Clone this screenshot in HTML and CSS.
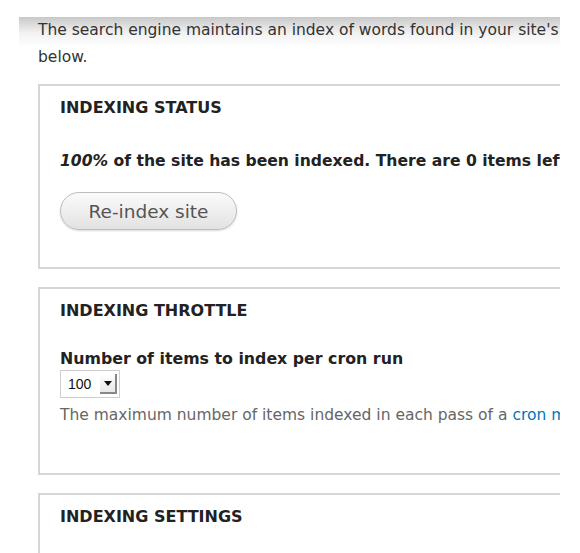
FILE: index.html
```html
<!DOCTYPE html>
<html>
<head>
<meta charset="utf-8">
<link rel="stylesheet" href="styles.css">
</head>
<body>
<div class="clip">
  <div class="page">
    <div class="help">
      <p><span class="line">The search engine maintains an index of words found in your site's content.</span><br>below.</p>
    </div>
    <fieldset class="group">
      <legend class="title">Indexing status</legend>
      <p class="status"><em>100%</em> of the site has been indexed. There are 0 items left to index.</p>
      <button class="btn" type="button">Re-index site</button>
    </fieldset>
    <fieldset class="group">
      <legend class="title">Indexing throttle</legend>
      <label class="label">Number of items to index per cron run</label>
      <div class="select"><span class="val">100</span><span class="arrow"><svg width="8" height="5" viewBox="0 0 8 5"><path d="M0 0h8L4 5z" fill="#111"/></svg></span></div>
      <p class="desc">The maximum number of items indexed in each pass of a <a href="#">cron maintenance task</a>.</p>
    </fieldset>
    <fieldset class="group last">
      <legend class="title">Indexing settings</legend>
    </fieldset>
  </div>
</div>
</body>
</html>
```
FILE: styles.css
```css
html, body { margin: 0; padding: 0; background: #fff; }
body { font-family: "DejaVu Sans", Verdana, sans-serif; color: #333; }
.clip { width: 560px; height: 553px; overflow: hidden; }
.page { width: 900px; }
.help {
  margin: 17px 0 0 19px;
  padding: 0 0 0 19px;
  background: linear-gradient(to bottom, #c8c8c8 0px, #f2f2f2 16px, #fff 30px);
}
.help p { margin: 0; font-size: 15.5px; line-height: 27px; }
.line { white-space: nowrap; }
.group {
  margin: 0 0 18px 38px;
  padding: 0 20px 20px 20px;
  border: 2px solid #d6d6d6;
  min-width: 0;
  width: 800px;
  box-sizing: border-box;
}
.help + .group { margin-top: 13px; }
.title {
  display: block;
  float: left;
  width: 100%;
  margin: 0;
  padding: 12px 0 0;
  font-size: 16px;
  font-weight: bold;
  text-transform: uppercase;
  color: #222;
  line-height: 20px;
}
.title + * { clear: both; }
.status { margin: 0; padding-top: 32px; font-size: 15.6px; font-weight: bold; color: #222; line-height: 22px; white-space: nowrap; }
.status em { font-style: italic; }
.btn {
  margin-top: 20px;
  margin-bottom: 17px;
  width: 177px;
  height: 38px;
  border-radius: 20px;
  border: 1px solid #bdbdbd;
  background: linear-gradient(to bottom, #fbfbfb, #e2e2e2);
  box-shadow: 0 1px 2px rgba(0,0,0,0.15);
  font-family: "DejaVu Sans", Verdana, sans-serif;
  font-size: 18.5px;
  color: #555;
  padding: 0;
}
.label { display: block; padding-top: 27px; font-size: 15.8px; font-weight: bold; color: #222; line-height: 22px; white-space: nowrap; }
.select {
  margin-top: 0;
  width: 60px; height: 28px;
  border: 1px solid #cfcfcf;
  box-sizing: border-box;
  display: flex; align-items: center; justify-content: space-between;
  padding: 0 2px 0 7px;
  font-family: "Liberation Sans", Arial, sans-serif;
  font-size: 14px; color: #111;
}
.arrow {
  width: 17px; height: 20px;
  display: flex; align-items: center; justify-content: center;
  background: linear-gradient(#fff, #e8e8e8);
  border-right: 2px solid #888;
  border-bottom: 2px solid #888;
  box-sizing: border-box;
}
.desc { margin: 4px 0 0; font-size: 15.5px; color: #666; line-height: 26px; padding-bottom: 25px; white-space: nowrap; }
.desc a { color: #0074bd; text-decoration: none; }
.last { height: 80px; }
```
